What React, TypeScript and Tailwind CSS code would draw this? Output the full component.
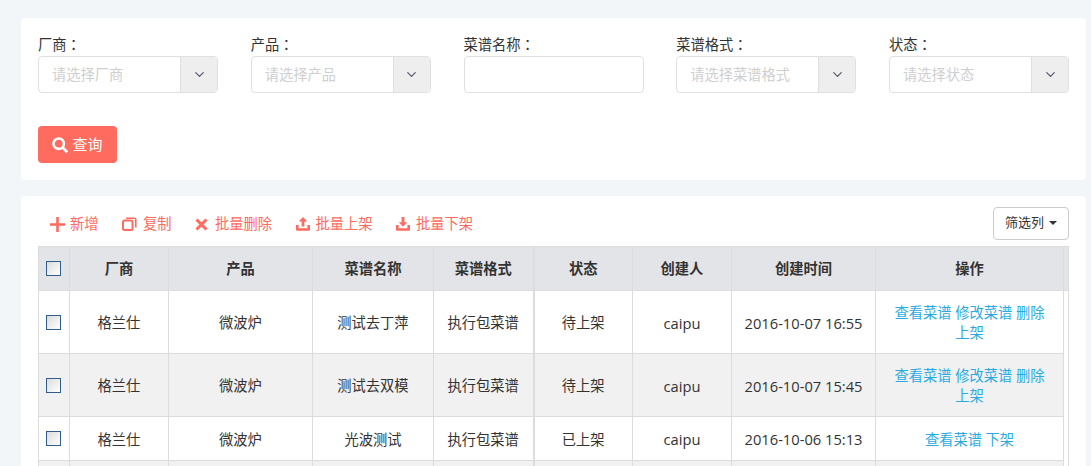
import React from 'react';
import { ChevronDown } from 'lucide-react';

const filters = [
  { label: '厂商', placeholder: '请选择厂商', select: true },
  { label: '产品', placeholder: '请选择产品', select: true },
  { label: '菜谱名称', placeholder: '', select: false },
  { label: '菜谱格式', placeholder: '请选择菜谱格式', select: true },
  { label: '状态', placeholder: '请选择状态', select: true },
];

const columns = ['厂商', '产品', '菜谱名称', '菜谱格式', '状态', '创建人', '创建时间', '操作'];
const colWidths = ['w-[31px]', 'w-[99px]', 'w-[144px]', 'w-[121px]', 'w-[100px]', 'w-[99px]', 'w-[99px]', 'w-[144px]', 'w-[188px]', 'w-[5px]'];

const rows = [
  { name: '测试去丁萍', status: '待上架', time: '2016-10-07 16:55', ops: ['查看菜谱', '修改菜谱', '删除', '上架'], h: 'h-[63px]' },
  { name: '测试去双模', status: '待上架', time: '2016-10-07 15:45', ops: ['查看菜谱', '修改菜谱', '删除', '上架'], h: 'h-[63px]' },
  { name: '光波测试', status: '已上架', time: '2016-10-06 15:13', ops: ['查看菜谱', '下架'], h: 'h-[44px]' },
];

const PlusIcon = () => (
  <svg width="15" height="15" viewBox="0 0 15 15" fill="#ff6b5e"><path d="M6.2 0h2.6v6.2H15v2.6H8.8V15H6.2V8.8H0V6.2h6.2z" /></svg>
);
const CopyIcon = () => (
  <svg width="15" height="14" viewBox="0 0 15 14" fill="none" stroke="#ff6b5e">
    <rect x="1" y="3.5" width="9.5" height="9.5" rx="1.5" strokeWidth="2" />
    <path d="M4 1.2h8A1.8 1.8 0 0 1 13.8 3v7.5" strokeWidth="1.6" />
  </svg>
);
const CloseIcon = () => (
  <svg width="13" height="13" viewBox="0 0 13 13" stroke="#ff6b5e" strokeWidth="3"><path d="M1.5 1.5l10 10M11.5 1.5l-10 10" /></svg>
);
const UploadIcon = () => (
  <svg width="14" height="14" viewBox="0 0 14 14" fill="#ff6b5e">
    <path d="M7 0l4.2 4.4H8.4V9.5H5.6V4.4H2.8z" />
    <path d="M0 8h2.6v3.2h8.8V8H14v4.5a1.2 1.2 0 0 1-1.2 1.2H1.2A1.2 1.2 0 0 1 0 12.5z" />
  </svg>
);
const DownloadIcon = () => (
  <svg width="14" height="14" viewBox="0 0 14 14" fill="#ff6b5e">
    <path d="M5.6 0h2.8v5.2h2.8L7 9.8 2.8 5.2h2.8z" />
    <path d="M0 8h2.6v3.2h8.8V8H14v4.5a1.2 1.2 0 0 1-1.2 1.2H1.2A1.2 1.2 0 0 1 0 12.5z" />
  </svg>
);

const SearchIcon = () => (
  <svg width="16" height="16" viewBox="0 0 16 16" fill="none" stroke="#fff">
    <circle cx="6.7" cy="6.7" r="5.2" strokeWidth="2.6" />
    <path d="M10.6 10.6L15.2 15.2" strokeWidth="2.8" />
  </svg>
);

const actions = [
  { icon: <PlusIcon />, label: '新增', gap: 'gap-[5px]' },
  { icon: <CopyIcon />, label: '复制', gap: 'gap-[6px]' },
  { icon: <CloseIcon />, label: '批量删除', gap: 'gap-[7px]' },
  { icon: <UploadIcon />, label: '批量上架', gap: 'gap-[6px]' },
  { icon: <DownloadIcon />, label: '批量下架', gap: 'gap-[6px]' },
];

const Checkbox = () => (
  <input
    type="checkbox"
    className="block ml-[7px] appearance-none w-[15px] h-[15px] border border-[#2f5d8c] bg-linear-to-br from-[#dcdcd6] to-white"
  />
);

const latinCell = 'text-[14.7px]';

export default function App() {
  return (
    <div
      className="h-[466px] overflow-hidden bg-[#f3f6f9] pt-[18px] pl-[21px] pr-[5px] text-[14.25px] text-[#333]"
      style={{ fontFamily: '"Open Sans", "Noto Sans CJK SC", sans-serif' }}
    >
      <div className="h-[162px] rounded bg-white pt-[16px] px-[17px]">
        <div className="grid grid-cols-5 gap-x-[32.75px]">
          {filters.map((f) => (
            <div key={f.label}>
              <label className="block h-[22px] leading-[20px] whitespace-nowrap">
                {f.label}
                <span className="font-['Noto_Sans_CJK_TC']">：</span>
              </label>
              <div className="flex h-[37px] rounded border border-[#e0e0e0] overflow-hidden">
                <div className="flex-1 pl-[13px] leading-[36px] text-[#cfcfcf]">{f.placeholder}</div>
                {f.select && (
                  <div className="w-[37px] flex items-center justify-center border-l border-[#e0e0e0] bg-[#eeeeee]">
                    <ChevronDown size={15} strokeWidth={2} className="text-[#555b66]" />
                  </div>
                )}
              </div>
            </div>
          ))}
        </div>
        <button className="mt-[33px] flex items-center justify-center gap-[4px] w-[79px] h-[37px] rounded bg-[#ff6b5e] text-white text-[15px]">
          <SearchIcon />
          查询
        </button>
      </div>

      <div className="mt-[16px] h-[300px] rounded bg-white px-[17px]">
        <div className="flex items-center justify-between h-[50px] pt-[4px]">
          <div className="flex items-center gap-[23.5px] pl-[12px] pt-[2px] text-[#ff6b5e]">
            {actions.map((a) => (
              <span key={a.label} className={`flex items-center ${a.gap}`}>
                {a.icon}
                {a.label}
              </span>
            ))}
          </div>
          <button className="flex items-center gap-[5px] h-[33px] w-[76px] justify-center rounded border border-[#ccc] bg-white text-[#333] text-[13px]">
            筛选列
            <span className="w-0 h-0 border-x-[4px] border-x-transparent border-t-[4px] border-t-[#333]" />
          </button>
        </div>

        <table className="table-fixed border-collapse w-[1031px] text-center">
          <colgroup>
            {colWidths.map((w, i) => (
              <col key={i} className={w} />
            ))}
          </colgroup>
          <thead>
            <tr className="h-[44px] bg-[#e3e4e8]">
              <th className="border border-[#dcdcdc] font-normal"><Checkbox /></th>
              {columns.map((c, i) => (
                <th key={c} className={`border border-[#dcdcdc] font-bold ${i === 3 ? 'border-r-2' : ''}`}>{c}</th>
              ))}
              <th className="border border-[#dcdcdc]" />
            </tr>
          </thead>
          <tbody>
            {rows.map((r, i) => (
              <tr key={r.name} className={r.h}>
                <td className={`border border-[#dcdcdc] ${i % 2 ? 'bg-[#f1f1f1]' : 'bg-white'}`}><Checkbox /></td>
                <td className={`border border-[#dcdcdc] pt-[2px] ${i % 2 ? 'bg-[#f1f1f1]' : 'bg-white'}`}>格兰仕</td>
                <td className={`border border-[#dcdcdc] pt-[2px] ${i % 2 ? 'bg-[#f1f1f1]' : 'bg-white'}`}>微波炉</td>
                <td className={`border border-[#dcdcdc] pt-[2px] ${i % 2 ? 'bg-[#f1f1f1]' : 'bg-white'}`}>{r.name}</td>
                <td className={`border border-[#dcdcdc] border-r-2 pt-[2px] ${i % 2 ? 'bg-[#f1f1f1]' : 'bg-white'}`}>执行包菜谱</td>
                <td className={`border border-[#dcdcdc] pt-[2px] ${i % 2 ? 'bg-[#f1f1f1]' : 'bg-white'}`}>{r.status}</td>
                <td className={`border border-[#dcdcdc] pt-[2px] ${latinCell} ${i % 2 ? 'bg-[#f1f1f1]' : 'bg-white'}`}>caipu</td>
                <td className={`border border-[#dcdcdc] pt-[2px] ${latinCell} ${i % 2 ? 'bg-[#f1f1f1]' : 'bg-white'}`}>{r.time}</td>
                <td className={`border border-[#dcdcdc] px-[18px] pt-[2px] leading-[20px] text-[#29abe2] ${i % 2 ? 'bg-[#f1f1f1]' : 'bg-white'}`}>
                  {r.ops.join(' ')}
                </td>
                <td className="border-r border-[#dcdcdc] bg-white" />
              </tr>
            ))}
            <tr className="h-[44px]">
              {colWidths.slice(0, 9).map((_, j) => (
                <td key={j} className={`border border-[#dcdcdc] bg-[#f1f1f1] ${j === 4 ? 'border-r-2' : ''}`} />
              ))}
              <td className="border-r border-[#dcdcdc] bg-white" />
            </tr>
          </tbody>
        </table>
      </div>
    </div>
  );
}
